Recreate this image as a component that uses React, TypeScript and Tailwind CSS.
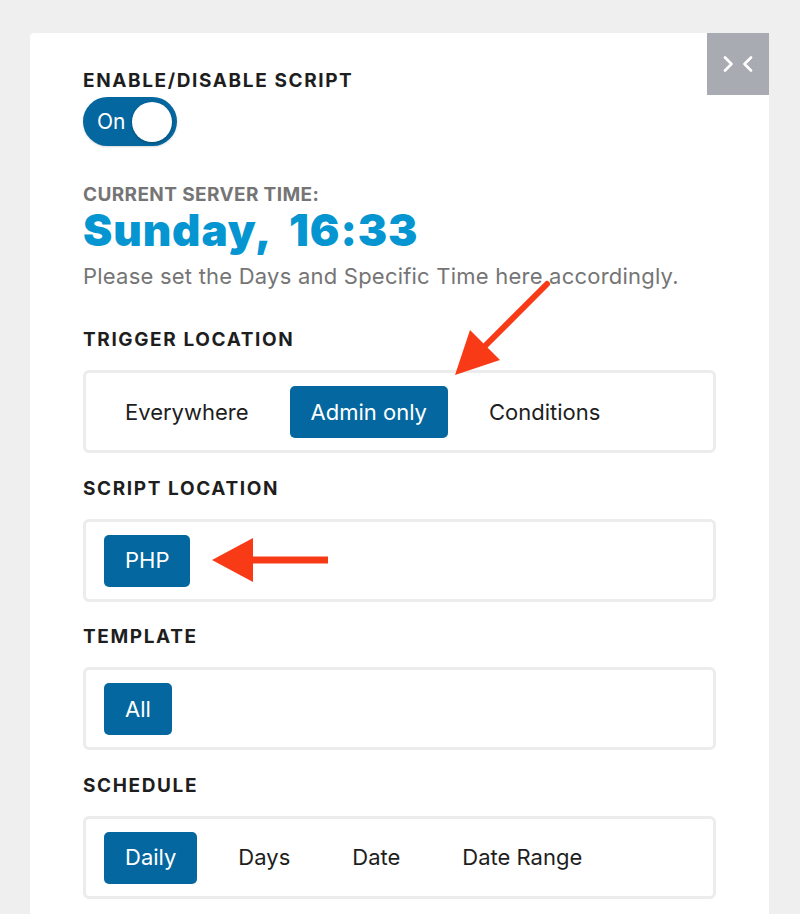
import React from 'react'

const sections = [
  { label: 'Trigger location', options: ['Everywhere', 'Admin only', 'Conditions'], active: 'Admin only' },
  { label: 'Script location', options: ['PHP'], active: 'PHP' },
  { label: 'Template', options: ['All'], active: 'All' },
  { label: 'Schedule', options: ['Daily', 'Days', 'Date', 'Date Range'], active: 'Daily' },
]

function Label({ children, className = '' }: { children: React.ReactNode; className?: string }) {
  return (
    <div className={`text-[19px] leading-6 font-bold uppercase tracking-[0.085em] text-[#1e1e1e] ${className}`}>
      {children}
    </div>
  )
}

function Segmented({ options, active }: { options: string[]; active: string }) {
  return (
    <div className="flex items-center gap-5 rounded-md border-[3px] border-[#ececec] px-[18px] pb-[12px] pt-[13px]">
      {options.map((opt) => (
        <button
          key={opt}
          className={
            opt === active
              ? 'h-[52px] rounded-[5px] bg-[#05679f] px-[21px] text-[22px] text-white'
              : 'h-[52px] rounded-[5px] px-[21px] text-[22px] text-[#1e1e1e]'
          }
        >
          {opt}
        </button>
      ))}
    </div>
  )
}

export default function App() {
  return (
    <div className="min-h-[914px] bg-[#efefef] pl-[30px] pr-[31px] pt-[33px] font-['Inter',sans-serif]">
      <div className="relative min-h-[881px] rounded-t-[4px] bg-white px-[53px] pt-[36px]">
        {/* collapse */}
        <button className="absolute right-0 top-0 flex h-[62px] w-[62px] items-center justify-center bg-[#a8abb2]">
          <svg width="32" height="16" viewBox="0 0 32 16" fill="none" stroke="white" strokeWidth="2.6" strokeLinecap="round" strokeLinejoin="round">
            <path d="M3 1.5l6.5 6.5-6.5 6.5" />
            <path d="M29 1.5l-6.5 6.5 6.5 6.5" />
          </svg>
        </button>

        <Label>Enable/Disable script</Label>
        <div className="relative mt-[4px] flex h-[49px] w-[94px] items-center rounded-full bg-[#05679f] pl-[14px] shadow-[0_1px_2px_rgba(0,0,0,0.15)]">
          <span className="text-[21px] text-white">On</span>
          <span className="absolute right-[5px] top-[4.5px] h-10 w-10 rounded-full bg-white shadow-[0_1px_3px_rgba(0,0,0,0.3)]" />
        </div>

        <div className="mt-[37px] text-[19px] font-bold uppercase leading-6 tracking-[0.02em] text-[#757575]">
          Current server time:
        </div>
        <div className="mt-[1px] whitespace-pre text-[44px] font-black leading-[44px] tracking-[0.02em] text-[#0596d1]">
          {'Sunday,  16:33'}
        </div>
        <div className="mt-[8px] text-[22px] leading-8 tracking-[0.01em] text-[#757575]">
          Please set the Days and Specific Time here accordingly.
        </div>

        <div className="mt-[36px] flex flex-col gap-[23.5px]">
          {sections.map((s) => (
            <div key={s.label}>
              <Label className="mb-[18px]">{s.label}</Label>
              <Segmented options={s.options} active={s.active} />
            </div>
          ))}
        </div>

        {/* annotation arrows */}
        <svg className="pointer-events-none absolute left-[-30px] top-[-36px]" width="800" height="914" viewBox="0 0 800 914">
          <path d="M547 287 L482 352" stroke="#f93a17" strokeWidth="6" strokeLinecap="round" />
          <path d="M455 378 L470 333 L500 363 Z" fill="#f93a17" />
          <path d="M328 563 L246 563" stroke="#f93a17" strokeWidth="7" />
          <path d="M212 563 L253 541 L253 585 Z" fill="#f93a17" />
        </svg>
      </div>
    </div>
  )
}
